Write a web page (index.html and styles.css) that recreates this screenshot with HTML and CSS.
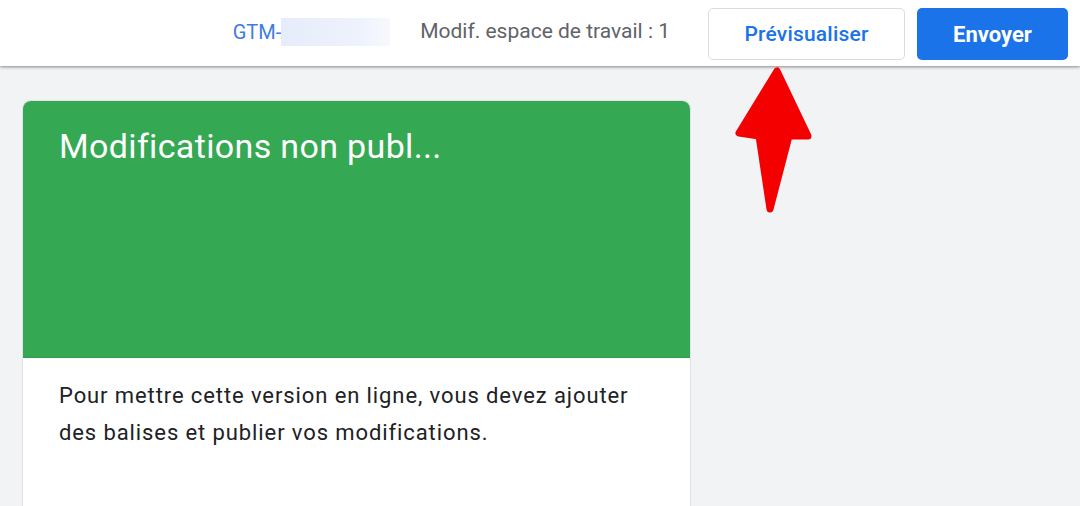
FILE: index.html
```html
<!DOCTYPE html>
<html lang="fr">
<head>
    <meta charset="UTF-8" />
    <meta name="viewport" content="width=device-width, initial-scale=1.0" />
    <title>Espace de travail</title>
    <link rel="stylesheet" href="styles.css">
</head>
<body>

<!-- Barre du haut -->
<div class="topbar">
    <div class="container-id">
        <span class="gtm">GTM-</span><span class="masque"></span>
    </div>
    <div class="modifs">Modif. espace de travail : 1</div>
    <button class="btn btn-preview">Prévisualiser</button>
    <button class="btn btn-send">Envoyer</button>
</div>

<!-- Flèche d'annotation -->
<svg class="fleche" width="90" height="155" viewBox="0 0 90 155">
    <path d="M47 9 L9 71 L29 74 L40 147 L59 74 L78 74 Z" fill="#f40000" stroke="#f40000" stroke-width="7" stroke-linejoin="round"/>
</svg>

<div class="contenu">
    <div class="carte">
        <div class="carte-haut">
            <h2>Modifications non publ...</h2>
        </div>
        <div class="carte-corps">
            <p>Pour mettre cette version en ligne, vous devez ajouter des balises et publier vos modifications.</p>
        </div>
    </div>
</div>

</body>
</html>
```

FILE: styles.css
```css
body {
    margin: 0;
    font-family: Roboto, "Noto Sans", Arial, sans-serif;
    background-color: #f1f3f4;
    height: 506px;
    overflow: hidden;
}

/* Barre du haut */
.topbar {
    height: 66px;
    background-color: #fff;
    box-shadow: 0 1px 3px rgba(0, 0, 0, 0.45);
    display: flex;
    align-items: center;
    justify-content: flex-end;
    padding-right: 12px;
    position: relative;
    z-index: 1;
}

.container-id {
    display: flex;
    align-items: center;
    margin-right: 30px;
    padding-bottom: 2px;
}

.gtm {
    color: #3f7be6;
    font-size: 20px;
}

.masque {
    display: block;
    width: 109px;
    height: 28px;
    background: linear-gradient(90deg, #e6ecfb, #eef2fc 70%, #f8f9fd);
}

.modifs {
    color: #5f6368;
    font-size: 21px;
    margin-right: 38px;
    padding-bottom: 4px;
}

.btn {
    height: 52px;
    border-radius: 5px;
    font-family: Roboto, "Noto Sans", Arial, sans-serif;
    cursor: pointer;
    margin-top: 2px;
}

.btn-preview {
    width: 197px;
    background-color: #fff;
    border: 1px solid #dadce0;
    color: #1a73e8;
    font-weight: 500;
    font-size: 21px;
    letter-spacing: 0.2px;
    margin-right: 12px;
}

.btn-send {
    width: 151px;
    background-color: #1a73e8;
    border: none;
    color: #fff;
    font-weight: 700;
    font-size: 22px;
}

/* Flèche rouge */
.fleche {
    position: absolute;
    left: 730px;
    top: 62px;
    z-index: 2;
}

/* Carte */
.contenu {
    padding: 35px 23px 0;
}

.carte {
    width: 667px;
    border-radius: 8px 8px 0 0;
    overflow: hidden;
    background-color: #fff;
    box-shadow: 0 0 0 1px #e0e2e5;
}

.carte-haut {
    background-color: #34a853;
    height: 256px;
    padding: 0 36px;
    border-bottom: 1px solid #2f9a4b;
}

.carte-haut h2 {
    margin: 0;
    padding-top: 25px;
    color: #fff;
    font-weight: 400;
    font-size: 34px;
    letter-spacing: 0.35px;
}

.carte-corps {
    padding: 19px 36px 0;
    height: 129px;
}

.carte-corps p {
    margin: 0;
    color: #202124;
    font-size: 22px;
    letter-spacing: 0.9px;
    line-height: 37px;
    width: 600px;
}
```
